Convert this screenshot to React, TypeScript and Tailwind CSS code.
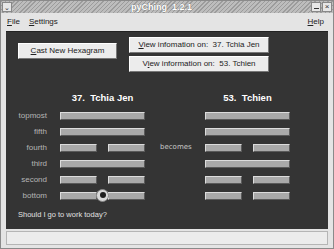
const font = "font-['Liberation_Sans',Arial,sans-serif]"

type Line = 'yang' | 'yin'

const left: { label: string; line: Line }[] = [
  { label: 'topmost', line: 'yang' },
  { label: 'fifth', line: 'yang' },
  { label: 'fourth', line: 'yin' },
  { label: 'third', line: 'yang' },
  { label: 'second', line: 'yin' },
  { label: 'bottom', line: 'yin' },
]

const right: Line[] = ['yang', 'yang', 'yin', 'yang', 'yin', 'yin']

function Bar({ w }: { w: string }) {
  return (
    <div
      className={`${w} h-[8px] bg-[#a9a9a9] border-t border-l border-t-[#dcdcdc] border-l-[#dcdcdc] border-b border-r border-b-[#5a5a5a] border-r-[#5a5a5a]`}
    />
  )
}

function HexLine({ line, radio }: { line: Line; radio?: boolean }) {
  return (
    <div className="relative w-[85px] h-[8px] flex justify-between">
      {line === 'yang' ? (
        <Bar w="w-[85px]" />
      ) : (
        <>
          <Bar w="w-[37px]" />
          <Bar w="w-[37px]" />
        </>
      )}
      {radio && (
        <div className="absolute left-[36px] top-[-3px] w-[13px] h-[13px] rounded-full bg-[#d8d8d8] border border-[#888] flex items-center justify-center">
          <div className="w-[6px] h-[6px] rounded-full bg-[#1e1e1e]" />
        </div>
      )}
    </div>
  )
}

function Btn({ children, w }: { children: React.ReactNode; w: string }) {
  return (
    <div
      className={`${w} h-[16px] bg-[#ececec] border border-t-white border-l-white border-b-[#777] border-r-[#777] flex items-center justify-center text-[8px] text-[#222]`}
    >
      {children}
    </div>
  )
}

export default function App() {
  return (
    <div className={`${font} w-[334px] h-[249px] bg-[#e4e4e4] border border-[#8a8a8a] flex flex-col overflow-hidden`}>
      {/* title bar */}
      <div className="h-[12px] flex items-center bg-[repeating-linear-gradient(135deg,#9c9c9c_0px,#9c9c9c_1px,#bdbdbd_1px,#bdbdbd_3px)]">
        <div className="ml-[1px] w-[10px] h-[10px] bg-[#e6e6e6] border border-[#888] flex items-center justify-center text-[7px] leading-none text-[#333]">
          ⌄
        </div>
        <div className="flex-1 flex justify-center">
          <span className="px-[4px] text-[9px] leading-none font-bold text-white [text-shadow:0_0_1px_#555]">
            pyChing&nbsp;&nbsp;1.2.1
          </span>
        </div>
        <div className="mr-[1px] flex gap-[1px]">
          <div className="w-[10px] h-[10px] bg-[#e6e6e6] border border-[#888] flex items-end justify-center pb-[2px]">
            <div className="w-[5px] h-[1px] bg-[#333]" />
          </div>
          <div className="w-[10px] h-[10px] bg-[#e6e6e6] border border-[#888] flex items-center justify-center text-[8px] leading-none text-[#333]">
            ×
          </div>
        </div>
      </div>

      {/* menu bar */}
      <div className="h-[18px] flex items-center px-[6px] text-[8px] text-[#222]">
        <span className="mr-[9px]">
          <span className="underline">F</span>ile
        </span>
        <span>
          <span className="underline">S</span>ettings
        </span>
        <span className="ml-auto mr-[3px]">
          <span className="underline">H</span>elp
        </span>
      </div>

      {/* main panel */}
      <div className="mx-[5px] h-[198px] bg-[#343434] border-t border-[#222] flex flex-col">
        <div className="flex pt-[5px]">
          <div className="ml-[12px] mt-[6px]">
            <Btn w="w-[99px]">
              <span>
                <span className="underline">C</span>ast New Hexagram
              </span>
            </Btn>
          </div>
          <div className="ml-[12px] flex flex-col gap-[3px]">
            <Btn w="w-[140px]">
              <span>
                <span className="underline">V</span>iew infomation on:&nbsp; 37. Tchia Jen
              </span>
            </Btn>
            <Btn w="w-[140px]">
              <span>
                V<span className="underline">i</span>ew information on:&nbsp; 53. Tchien
              </span>
            </Btn>
          </div>
        </div>

        {/* headings */}
        <div className="flex mt-[21px] text-[9.5px] font-bold text-white leading-none">
          <div className="ml-[54px] w-[85px] text-center">37.&nbsp; Tchia Jen</div>
          <div className="ml-[60px] w-[85px] text-center">53.&nbsp; Tchien</div>
        </div>

        {/* lines */}
        <div className="mt-[9px] flex flex-col gap-[8px]">
          {left.map((row, i) => (
            <div key={row.label} className="flex items-center h-[8px]">
              <div className="w-[41px] text-right text-[8px] text-[#b4b4b4] leading-none">{row.label}</div>
              <div className="ml-[13px]">
                <HexLine line={row.line} radio={i === 5} />
              </div>
              <div className="w-[60px] pl-[15px] text-[7px] text-[#c8c8c8] leading-none font-['DejaVu_Sans',sans-serif]">
                {i === 2 ? 'becomes' : ''}
              </div>
              <HexLine line={right[i]} />
            </div>
          ))}
        </div>

        <div className="ml-[12px] mt-[11px] text-[7.5px] text-[#e0e0e0] leading-none">Should I go to work today?</div>
      </div>

      {/* status bar */}
      <div className="mx-[5px] mt-[2px] h-[14px] bg-[#ececec] border border-[#b5b5b5]" />
    </div>
  )
}
